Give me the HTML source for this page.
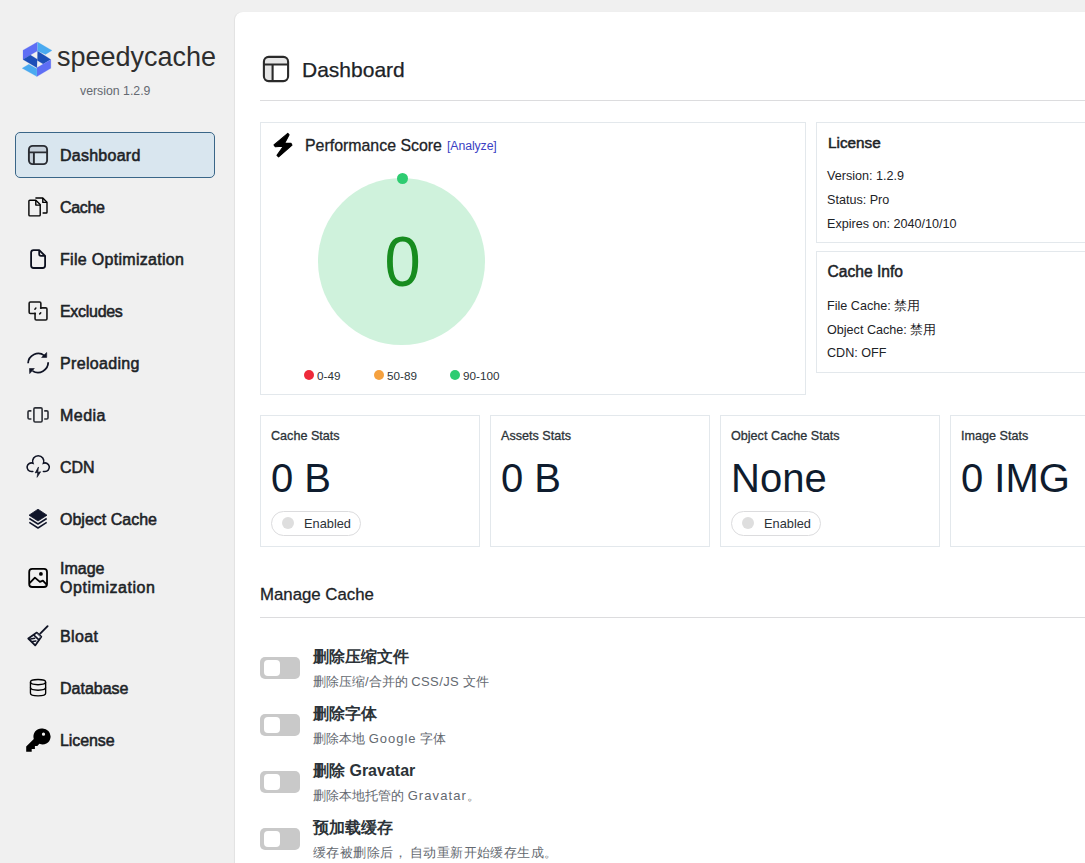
<!DOCTYPE html>
<html><head><meta charset="utf-8">
<style>
*{box-sizing:border-box;margin:0;padding:0}
html,body{width:1085px;height:863px;overflow:hidden}
body{background:#f0f0f0;font-family:"Liberation Sans",sans-serif;color:#1d2327;position:relative}
.abs{position:absolute;white-space:nowrap}
#panel{position:absolute;left:235px;top:12px;width:900px;height:900px;background:#fff;border-radius:8px 0 0 0;box-shadow:-1px 0 1px rgba(0,0,0,0.06)}
.menu{position:absolute;left:0;width:235px}
.mi{position:absolute;left:60px;margin-top:1px;font-size:16px;font-weight:400;-webkit-text-stroke:0.55px #1d2327;color:#1d2327;white-space:nowrap}
.ic{position:absolute;left:26px}
.card{position:absolute;border:1px solid #e3e8ec;background:#fff}
.t13{font-size:12.6px;color:#1d2327;margin-top:0.5px}
.tg{position:absolute;left:260px;width:40px;height:22px;background:#c9c9c9;border-radius:5px}
.tg i{position:absolute;left:3.5px;top:3px;width:16px;height:15.5px;background:#fff;border-radius:4px}
.rt{left:313px;font-size:16px;font-weight:700;color:#2c3338}
.rd{left:313px;font-size:13px;color:#646970;margin-top:-1px}
</style></head><body>
<!-- logo -->
<svg class="abs" style="left:20px;top:40px" width="35" height="40" viewBox="0 0 35 40" stroke-width="0.2" stroke-linejoin="round">
<polygon fill="#5e6ef5" stroke="#5e6ef5" points="17.4,2.1 3,10.2 3,19.5 10.4,15.1 17.4,10.9"/>
<polygon fill="#1d4fb8" stroke="#1d4fb8" points="3,19.5 10.4,15.1 17.2,19.2 16.9,27.8"/>
<polygon fill="#1d4fb8" stroke="#1d4fb8" points="17.6,10.9 30.8,19.5 23.2,24.1 17.4,20.4"/>
<polygon fill="#5e6ef5" stroke="#5e6ef5" points="16.9,27.8 23.2,24.1 30.8,19.7 30.8,28.3 16.9,36.6"/>
<polygon fill="#4aaaf0" stroke="#4aaaf0" points="2.1,28.3 8.8,24.3 16.9,28.7 16.9,36.6"/>
<polygon fill="#4aaaf0" stroke="#4aaaf0" points="17.6,2.1 32,10.4 25.5,14.4 17.6,10.9"/>
</svg>
<div class="abs" style="left:57px;top:41.5px;font-size:27px;color:#2e2e2e">speedycache</div>
<div class="abs" style="left:80px;top:84px;font-size:12.3px;color:#646970">version 1.2.9</div>

<!-- active -->
<div class="abs" style="left:15px;top:132px;width:200px;height:46px;background:#d9e6ef;border:1px solid #3a6688;border-radius:5px"></div>

<div class="mi" style="top:146px;letter-spacing:0.25px">Dashboard</div>
<div class="mi" style="top:198px;letter-spacing:-0.35px">Cache</div>
<div class="mi" style="top:250px;letter-spacing:0.3px">File Optimization</div>
<div class="mi" style="top:302px;letter-spacing:-0.3px">Excludes</div>
<div class="mi" style="top:354px;letter-spacing:0.33px">Preloading</div>
<div class="mi" style="top:406px;letter-spacing:0.45px">Media</div>
<div class="mi" style="top:458px">CDN</div>
<div class="mi" style="top:510px">Object Cache</div>
<div class="mi" style="top:559px;line-height:18.5px">Image<br><span style="letter-spacing:0.55px">Optimization</span></div>
<div class="mi" style="top:627px;letter-spacing:0.35px">Bloat</div>
<div class="mi" style="top:679px">Database</div>
<div class="mi" style="top:731px;letter-spacing:-0.1px">License</div>


<!-- sidebar icons (local 30x30 at x=22) -->
<svg class="abs" style="left:22px;top:140px" width="30" height="30" viewBox="0 0 30 30" fill="none" stroke="#2a2d33" stroke-width="1.9">
<path d="M6.9 12.4H25.1V9.5Q25.1 5.9 21.5 5.9H10.5Q6.9 5.9 6.9 9.5Z" fill="#c5d0da" stroke="none"/>
<path d="M6.9 12.4H11.9V24.1H10.5Q6.9 24.1 6.9 20.5Z" fill="#c5d0da" stroke="none"/>
<rect x="6.9" y="5.9" width="18.2" height="18.2" rx="3.8"/>
<path d="M6.9 12.4H25.1M11.9 12.4V24.1"/>
</svg>
<svg class="abs" style="left:22px;top:192px" width="30" height="30" viewBox="0 0 30 30" fill="none" stroke="#000" stroke-width="1.4" stroke-linejoin="round">
<path d="M6.9 9Q6.9 8.2 7.9 8.2H13.8L18.2 12.6V23Q18.2 23.9 17.3 23.9H7.9Q6.9 23.9 6.9 23Z"/>
<path d="M13.8 8.2V13.1H18.2"/>
<path d="M13.4 6H20.8L25 10.2V20.2Q25 21 24.2 21H20.6"/>
<path d="M20.8 6V10.4H25"/>
</svg>
<svg class="abs" style="left:22px;top:244px" width="30" height="30" viewBox="0 0 30 30" fill="none" stroke="#0b0f1e" stroke-width="1.8" stroke-linejoin="round">
<path d="M17.2 6.1H11.6Q9.1 6.1 9.1 8.6V21.5Q9.1 24 11.6 24H20.6Q23.1 24 23.1 21.5V12Z"/>
<path d="M17.2 6.1V10Q17.2 11.8 19 11.8H23.1"/>
</svg>
<svg class="abs" style="left:22px;top:296px" width="30" height="30" viewBox="0 0 30 30" fill="none" stroke="#161616" stroke-width="1.6" stroke-linecap="round">
<path d="M12.9 17.45H8.4Q7.15 17.45 7.15 16.2V7.2Q7.15 5.95 8.4 5.95H17.6Q18.85 5.95 18.85 7.2V11.9"/>
<path d="M18.85 11.85H23.7Q24.95 11.85 24.95 13.1V22.7Q24.95 23.95 23.7 23.95H14.3Q13.05 23.95 13.05 22.7V17.6"/>
<path d="M12.9 13.2L13.9 12.1M17.7 17.9L18.7 16.9" stroke-width="1.5"/>
<circle cx="18.85" cy="12" r="1.05" fill="#161616" stroke="none"/>
<circle cx="13.05" cy="17.5" r="1.05" fill="#161616" stroke="none"/>
</svg>
<svg class="abs" style="left:22px;top:348px" width="30" height="30" viewBox="0 0 30 30" fill="none" stroke="#0f1324" stroke-width="1.8">
<path d="M6.1 15.3A10.2 10.2 0 0 1 22.4 7.6"/>
<path d="M26.2 14.3A10.2 10.2 0 0 1 10.6 22.9"/>
<path d="M24.7 4.5V9.4H19.6Z" fill="#0f1324" stroke-width="0.6" stroke-linejoin="round"/>
<path d="M7.5 20.5H12.3L7.7 25.6Z" fill="#0f1324" stroke-width="0.6" stroke-linejoin="round"/>
</svg>
<svg class="abs" style="left:22px;top:400px" width="30" height="30" viewBox="0 0 30 30" fill="none" stroke="#2c2f36" stroke-width="1.6">
<rect x="11.9" y="7.9" width="8.2" height="14.1" rx="1.2"/>
<path d="M9.4 10.9H7.2Q6 10.9 6 12.1V17.8Q6 19 7.2 19H9.4"/>
<path d="M22.2 10.9H24.8Q26 10.9 26 12.1V17.8Q26 19 24.8 19H22.2"/>
</svg>
<svg class="abs" style="left:22px;top:452px" width="30" height="30" viewBox="0 0 30 30" fill="none" stroke="#0f1324" stroke-width="1.6" stroke-linecap="round">
<path d="M10.8 19.5H9.4A4.3 4.3 0 1 1 10.92 11.18A5.6 5.6 0 1 1 21.48 11.18A4.3 4.3 0 1 1 23 19.5H21.4"/>
<path d="M16.3 15.3L13.2 20.9L18.6 19.8L15.3 25Z" fill="#0f1324" stroke-width="0.7" stroke-linejoin="round"/>
</svg>
<svg class="abs" style="left:22px;top:504px" width="30" height="30" viewBox="0 0 30 30" fill="none" stroke="#10152a" stroke-width="1.5" stroke-linejoin="round">
<path d="M16 5.2L25 11.2L16 17L7 11.2Z" fill="#10152a" stroke-width="0.8"/>
<path d="M7.3 14.5L16 20L24.7 14.5"/>
<path d="M7.3 18.4L16 24L24.7 18.4"/>
</svg>
<svg class="abs" style="left:22px;top:563px" width="30" height="30" viewBox="0 0 30 30" fill="none" stroke="#000" stroke-width="1.8" stroke-linejoin="round">
<rect x="7.2" y="5.9" width="17.8" height="18.1" rx="3"/>
<path d="M7.6 20.2L12.9 14.6L17.9 18.9L20.9 17.6L24.7 21.6"/>
<circle cx="18.9" cy="10.9" r="1.9" fill="#000" stroke="none"/>
</svg>
<svg class="abs" style="left:22px;top:621px" width="30" height="30" viewBox="0 0 30 30" fill="none" stroke="#0f1324" stroke-width="1.8" stroke-linecap="round" stroke-linejoin="round">
<path d="M25.6 5.2L18.2 12.6" stroke-width="1.9"/>
<path d="M14.8 11.6L19.3 15.7L13.2 24.4L6.3 17.5Z" fill="#f4f4f6"/>
<path d="M11.9 14.1L16.9 18.8" stroke-width="1.6"/>
<path d="M15.1 12.8L18.5 15.9" stroke="#8a8f9c" stroke-width="1"/>
<path d="M8.6 18L12.7 17.3M10.6 20.6L13.9 20" stroke-width="1.5"/>
</svg>
<svg class="abs" style="left:22px;top:673px" width="30" height="30" viewBox="0 0 30 30" fill="none" stroke="#000" stroke-width="1.35">
<ellipse cx="16.05" cy="9.1" rx="7.6" ry="2.6"/>
<path d="M8.45 9.1V20.3A7.6 2.6 0 0 0 23.65 20.3V9.1"/>
<path d="M8.45 14.6A7.6 2.6 0 0 0 23.65 14.6"/>
</svg>
<svg class="abs" style="left:22px;top:725px" width="30" height="30" viewBox="0 0 30 30">
<path fill="#000" fill-rule="evenodd" d="M19.8 3.5A8 8 0 1 1 17.4 18.8L15.3 20.9H12.9V24H9.7V26.8H4.2V21.6L11.8 13.9A8 8 0 0 1 19.8 3.5ZM21.5 7.6A1.6 1.6 0 1 0 21.5 10.8A1.6 1.6 0 1 0 21.5 7.6Z"/>
</svg>

<div id="panel"></div>

<!-- header -->
<div class="abs" style="left:302px;top:57.5px;font-size:21px;color:#1d2327;-webkit-text-stroke:0.25px #1d2327">Dashboard</div>
<div class="abs" style="left:260px;top:100px;width:830px;height:1px;background:#dcdcde"></div>


<svg class="abs" style="left:262px;top:55px" width="28" height="28" viewBox="0 0 28 28" fill="none" stroke="#2a2a2a" stroke-width="2.1">
<path d="M1.9 9.5H26.1V6.5Q26.1 1.9 21.5 1.9H6.5Q1.9 1.9 1.9 6.5Z" fill="#e6e6e6" stroke="none"/>
<path d="M1.9 9.5H10.6V26.1H6.5Q1.9 26.1 1.9 21.5Z" fill="#e6e6e6" stroke="none"/>
<rect x="1.9" y="1.9" width="24.2" height="24.2" rx="4.8"/>
<path d="M1.9 9.5H26.1M10.6 9.5V26.1"/>
</svg>


<!-- perf card -->
<div class="card" style="left:260px;top:122px;width:546px;height:273px"></div>
<svg class="abs" style="left:270px;top:130px" width="26" height="30" viewBox="0 0 26 30"><polygon fill="#000" stroke="#000" stroke-width="1.1" stroke-linejoin="round" points="17.8,3.4 4.0,14.9 5.3,16.7 13.4,16.3 7.0,25.4 8.6,26.9 22.0,15.2 21.1,13.4 14.5,13.4 19.1,4.8"/></svg>
<div class="abs" style="left:305px;top:137px;font-size:15.9px;color:#1d2327;-webkit-text-stroke:0.3px #1d2327">Performance Score</div>
<div class="abs" style="left:447px;top:138.5px;font-size:12.3px;letter-spacing:-0.1px;color:#3b3fc4">[Analyze]</div>
<div class="abs" style="left:318px;top:178px;width:167px;height:167px;border-radius:50%;background:#cff2dc"></div>
<div class="abs" style="left:397px;top:173px;width:11px;height:11px;border-radius:50%;background:#2ecc71"></div>
<div class="abs" style="left:382.5px;top:221.5px;font-size:70px;color:#178c1f;transform:scaleX(0.93);transform-origin:20px 0">0</div>
<div class="abs" style="left:304px;top:370px;width:10px;height:10px;border-radius:50%;background:#ee2a3a"></div>
<div class="abs" style="left:317px;top:369px;font-size:11.7px;color:#2c3338">0-49</div>
<div class="abs" style="left:374px;top:370px;width:10px;height:10px;border-radius:50%;background:#f5a13f"></div>
<div class="abs" style="left:387px;top:369px;font-size:11.7px;color:#2c3338">50-89</div>
<div class="abs" style="left:450px;top:370px;width:10px;height:10px;border-radius:50%;background:#2ecc71"></div>
<div class="abs" style="left:463px;top:369px;font-size:11.7px;color:#2c3338">90-100</div>

<!-- license card -->
<div class="card" style="left:816px;top:122px;width:300px;height:121px"></div>
<div class="abs" style="left:828px;top:133.5px;font-size:15.3px;font-weight:400;-webkit-text-stroke:0.5px #1d2327">License</div>
<div class="abs t13" style="left:827px;top:168px">Version: 1.2.9</div>
<div class="abs t13" style="left:827px;top:192px">Status: Pro</div>
<div class="abs t13" style="left:827px;top:216px">Expires on: 2040/10/10</div>

<div class="card" style="left:816px;top:251px;width:300px;height:122px"></div>
<div class="abs" style="left:827.5px;top:263px;font-size:15.6px;font-weight:400;-webkit-text-stroke:0.5px #1d2327">Cache Info</div>
<div class="abs t13" style="left:827px;top:297px">File Cache: 禁用</div>
<div class="abs t13" style="left:827px;top:321px">Object Cache: 禁用</div>
<div class="abs t13" style="left:827px;top:345px">CDN: OFF</div>

<!-- stats -->
<div class="card" style="left:260px;top:415px;width:220px;height:132px"></div>
<div class="card" style="left:490px;top:415px;width:220px;height:132px"></div>
<div class="card" style="left:720px;top:415px;width:220px;height:132px"></div>
<div class="card" style="left:950px;top:415px;width:220px;height:132px"></div>
<div class="abs" style="left:271px;top:429px;font-size:12.6px;font-weight:400;-webkit-text-stroke:0.3px #2c3338;color:#2c3338">Cache Stats</div>
<div class="abs" style="left:501px;top:429px;font-size:12.6px;font-weight:400;-webkit-text-stroke:0.3px #2c3338;color:#2c3338">Assets Stats</div>
<div class="abs" style="left:731px;top:429px;font-size:12.6px;font-weight:400;-webkit-text-stroke:0.3px #2c3338;color:#2c3338">Object Cache Stats</div>
<div class="abs" style="left:961px;top:429px;font-size:12.6px;font-weight:400;-webkit-text-stroke:0.3px #2c3338;color:#2c3338">Image Stats</div>
<div class="abs" style="left:271px;top:455.5px;font-size:40px;color:#0f1c2e">0 B</div>
<div class="abs" style="left:501px;top:455.5px;font-size:40px;color:#0f1c2e">0 B</div>
<div class="abs" style="left:731px;top:455.5px;font-size:40px;color:#0f1c2e">None</div>
<div class="abs" style="left:961px;top:455.5px;font-size:40px;color:#0f1c2e">0 IMG</div>
<div class="abs" style="left:271px;top:511px;width:90px;height:25px;border:1px solid #dcdcde;border-radius:13px"></div>
<div class="abs" style="left:282px;top:517px;width:12px;height:12px;border-radius:50%;background:#dedede"></div>
<div class="abs" style="left:304px;top:515.5px;font-size:12.8px;color:#2c3338">Enabled</div>
<div class="abs" style="left:731px;top:511px;width:90px;height:25px;border:1px solid #dcdcde;border-radius:13px"></div>
<div class="abs" style="left:742px;top:517px;width:12px;height:12px;border-radius:50%;background:#dedede"></div>
<div class="abs" style="left:764px;top:515.5px;font-size:12.8px;color:#2c3338">Enabled</div>

<!-- manage cache -->
<div class="abs" style="left:260px;top:585px;font-size:16.8px;color:#1d2327;-webkit-text-stroke:0.3px #1d2327">Manage Cache</div>
<div class="abs" style="left:260px;top:617px;width:830px;height:1px;background:#dcdcde"></div>

<div class="tg" style="top:657px"><i></i></div>
<div class="abs rt" style="top:647px">删除压缩文件</div>
<div class="abs rd" style="top:674px">删除压缩/合并的 <span style="letter-spacing:0.4px">CSS/JS</span> 文件</div>
<div class="tg" style="top:714px"><i></i></div>
<div class="abs rt" style="top:704px">删除字体</div>
<div class="abs rd" style="top:731px">删除本地 <span style="letter-spacing:1px">Google</span> 字体</div>
<div class="tg" style="top:771px"><i></i></div>
<div class="abs rt" style="top:761px">删除 Gravatar</div>
<div class="abs rd" style="top:788px">删除本地托管的 <span style="letter-spacing:1.1px">Gravatar</span>。</div>
<div class="tg" style="top:828px"><i></i></div>
<div class="abs rt" style="top:818px">预加载缓存</div>
<div class="abs rd" style="top:845px;letter-spacing:0.45px">缓存被删除后<span style="display:inline-block;width:16px">，</span>自动重新开始缓存生成。</div>
</body></html>
